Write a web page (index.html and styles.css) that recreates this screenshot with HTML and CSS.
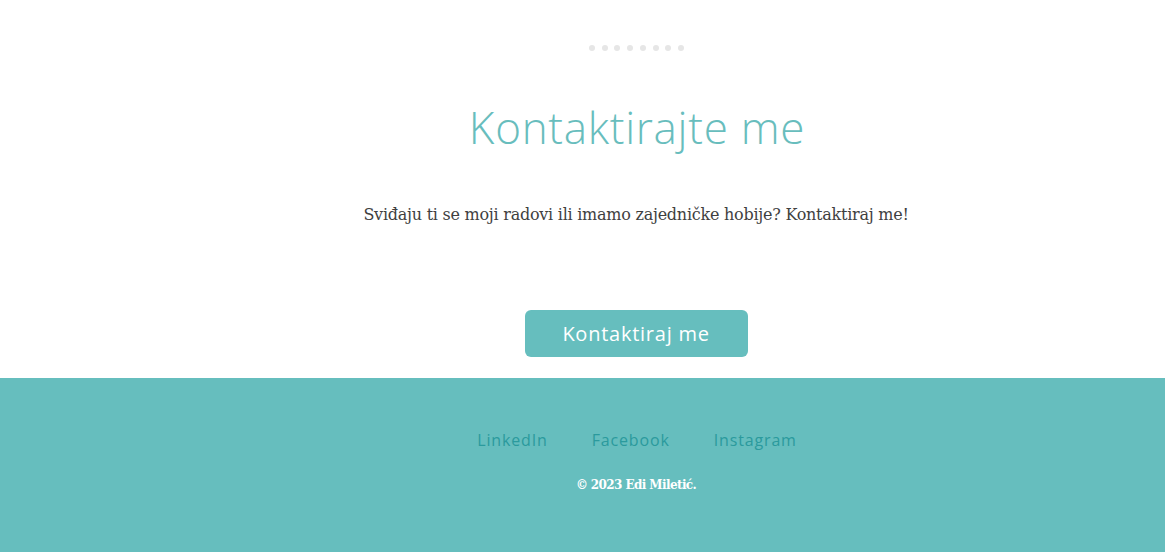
FILE: index.html
```html
<!DOCTYPE html>
<html lang="hr">
<head>
<meta charset="utf-8">
<title>Kontakt</title>
<link rel="stylesheet" href="styles.css">
</head>
<body>
<section class="contact">
  <div class="dots">
    <span></span><span></span><span></span><span></span><span></span><span></span><span></span><span></span>
  </div>
  <h2 class="title">Kontaktirajte me</h2>
  <p class="lead">Sviđaju ti se moji radovi ili imamo zajedničke hobije? Kontaktiraj me!</p>
  <a class="btn" href="#">Kontaktiraj me</a>
</section>
<footer class="footer">
  <nav class="social">
    <a href="#">LinkedIn</a>
    <a href="#">Facebook</a>
    <a href="#">Instagram</a>
  </nav>
  <p class="copy">© 2023 Edi Miletić.</p>
</footer>
</body>
</html>
```
FILE: styles.css
```css
* { box-sizing: border-box; }
html, body { margin: 0; padding: 0; background: #fff; }
body { font-family: "Open Sans", "Liberation Sans", sans-serif; }

.contact {
  display: flex;
  flex-direction: column;
  align-items: center;
  padding-top: 45px;
  padding-left: 107px;
  height: 378px;
}
.dots { display: flex; gap: 6.7px; padding-left: 1px; }
.dots span {
  width: 6px; height: 6px; border-radius: 50%;
  background: #e6e6e6;
}
.title {
  margin: 46px 0 0;
  font-family: "Open Sans", "Liberation Sans", sans-serif;
  font-weight: 300;
  font-size: 44px;
  line-height: 60px;
  letter-spacing: 0.7px;
  color: #68bdbd;
  padding-left: 2px;
}
.lead {
  margin: 46px 0 0;
  font-family: "DejaVu Serif", "Liberation Serif", serif;
  font-size: 16px;
  line-height: 24px;
  color: #3f3f3f;
  letter-spacing: -0.25px;
}
.btn {
  margin-top: 83px;
  width: 223px;
  height: 47px;
  border-radius: 6px;
  background: #66bebe;
  color: #fff;
  text-decoration: none;
  display: flex;
  align-items: center;
  justify-content: center;
  font-family: "Open Sans", "Liberation Sans", sans-serif;
  font-size: 20px;
  letter-spacing: 0.75px;
}

.footer {
  background: #66bebe;
  height: 174px;
  display: flex;
  flex-direction: column;
  align-items: center;
  padding-top: 50px;
  padding-left: 107px;
}
.social { display: flex; gap: 44px; padding-left: 2px; }
.social a {
  color: #2b9a9d;
  text-decoration: none;
  font-family: "Open Sans", "Liberation Sans", sans-serif;
  font-size: 16px;
  line-height: 24px;
  letter-spacing: 0.85px;
}
.copy {
  margin: 24px 0 0;
  color: #fff;
  font-family: "DejaVu Serif", "Liberation Serif", serif;
  font-weight: bold;
  font-size: 12px;
  line-height: 18px;
  letter-spacing: -0.6px;
}
```
